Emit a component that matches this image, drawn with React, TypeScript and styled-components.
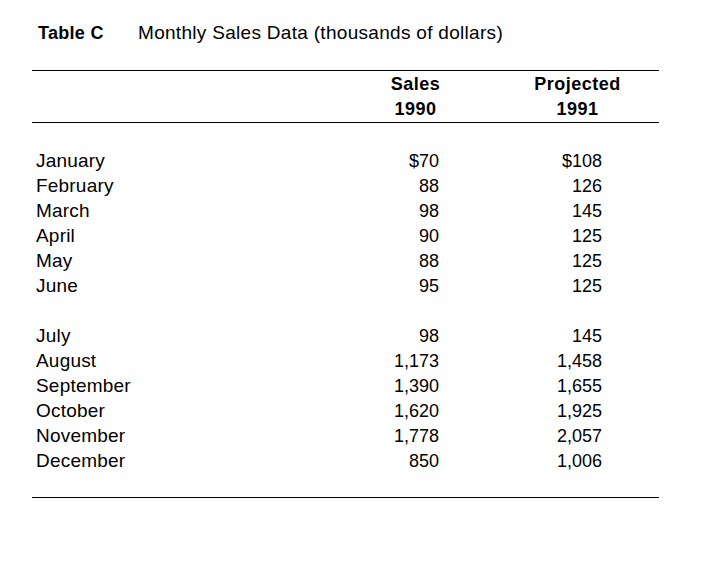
import React from 'react';
import styled, { createGlobalStyle } from 'styled-components';

const GlobalStyle = createGlobalStyle`
  html, body {
    margin: 0;
    padding: 0;
    background: #fff;
  }
  body {
    font-family: 'Liberation Sans', Arial, sans-serif;
    color: #000;
  }
`;

const Page = styled.div`
  width: 627px;
  padding: 21px 0 0 32px;
`;

const TitleRow = styled.div`
  display: flex;
  align-items: baseline;
  height: 25px;
  padding-left: 6px;
  font-size: 18px;
  line-height: 25px;
`;

const TitleLabel = styled.span`
  width: 100px;
  font-weight: 700;
  letter-spacing: 0.3px;
`;

const TitleText = styled.span`
  font-size: 19px;
  line-height: 24px;
  letter-spacing: 0.3px;
`;

const Table = styled.div`
  margin-top: 24px;
  width: 627px;
  font-size: 18px;
  line-height: 25px;
`;

const Head = styled.div`
  border-top: 1px solid #000;
  border-bottom: 1px solid #000;
  padding-top: 1px;
  font-weight: 700;
`;

const Body = styled.div`
  padding: 26px 0 23px;
  border-bottom: 1px solid #000;
`;

const Row = styled.div`
  display: grid;
  grid-template-columns: 356px 47px 163px;
  align-items: baseline;
  padding-left: 4px;
  height: 25px;
`;

const Label = styled.div`
  font-size: 19px;
  line-height: 24px;
  letter-spacing: 0.2px;
  white-space: nowrap;
`;

const Num = styled.div`
  text-align: right;
  white-space: nowrap;
`;

const HeadCell = styled.div<{ $width: number }>`
  width: ${(p) => p.$width}px;
  justify-self: end;
  display: flex;
  justify-content: center;
  white-space: nowrap;
  letter-spacing: 0.5px;
`;

const GroupGap = styled.div`
  height: 25px;
`;

type Month = { name: string; sales: string; projected: string };

const firstHalf: Month[] = [
  { name: 'January', sales: '$70', projected: '$108' },
  { name: 'February', sales: '88', projected: '126' },
  { name: 'March', sales: '98', projected: '145' },
  { name: 'April', sales: '90', projected: '125' },
  { name: 'May', sales: '88', projected: '125' },
  { name: 'June', sales: '95', projected: '125' },
];

const secondHalf: Month[] = [
  { name: 'July', sales: '98', projected: '145' },
  { name: 'August', sales: '1,173', projected: '1,458' },
  { name: 'September', sales: '1,390', projected: '1,655' },
  { name: 'October', sales: '1,620', projected: '1,925' },
  { name: 'November', sales: '1,778', projected: '2,057' },
  { name: 'December', sales: '850', projected: '1,006' },
];

const MonthRow: React.FC<{ month: Month }> = ({ month }) => (
  <Row>
    <Label>{month.name}</Label>
    <Num>{month.sales}</Num>
    <Num>{month.projected}</Num>
  </Row>
);

const App: React.FC = () => {
  return (
    <>
      <GlobalStyle />
      <Page>
        <TitleRow>
          <TitleLabel>Table C</TitleLabel>
          <TitleText>Monthly Sales Data (thousands of dollars)</TitleText>
        </TitleRow>
        <Table>
          <Head>
            <Row>
              <span />
              <HeadCell $width={47}>Sales</HeadCell>
              <HeadCell $width={49}>Projected</HeadCell>
            </Row>
            <Row>
              <span />
              <HeadCell $width={47}>1990</HeadCell>
              <HeadCell $width={49}>1991</HeadCell>
            </Row>
          </Head>
          <Body>
            {firstHalf.map((m) => (
              <MonthRow key={m.name} month={m} />
            ))}
            <GroupGap />
            {secondHalf.map((m) => (
              <MonthRow key={m.name} month={m} />
            ))}
          </Body>
        </Table>
      </Page>
    </>
  );
};

export default App;
